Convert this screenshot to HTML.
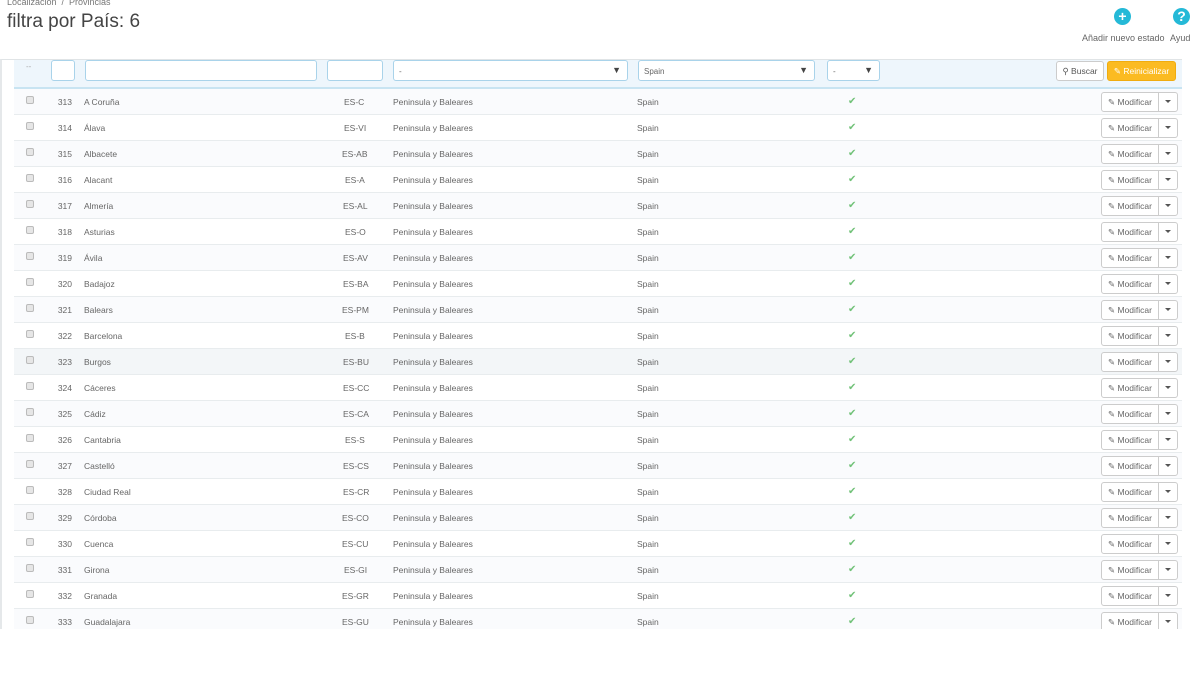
<!DOCTYPE html>
<html><head><meta charset="utf-8"><style>
*{box-sizing:border-box;margin:0;padding:0}
body{width:1200px;height:680px;background:#fff;font-family:"Liberation Sans",sans-serif;position:relative;overflow:hidden;color:#555}
.bc{position:absolute;left:7px;top:-3px;font-size:9px;color:#777}
h1{position:absolute;left:7px;top:11px;font-size:19px;font-weight:normal;color:#444}
.tb{position:absolute;top:8px;font-size:9px;color:#666;white-space:nowrap}
.ic{position:absolute;top:8px;width:17px;height:17px;border-radius:50%;background:#25b9d7;color:#fff;font-weight:bold;font-size:14px;line-height:17px;text-align:center}
.panel{position:absolute;left:0;top:59px;width:1182px;height:570px;border-left:2px solid #e5e8ea;border-top:1px solid #e0e4e6;overflow:hidden}
.filter{position:absolute;left:12px;top:0;width:1168px;height:29px;background:#eef6fc;border-bottom:2px solid #c8e4f2}
.in{position:absolute;top:0;height:21px;border:1px solid #a9d3ea;border-radius:3px;background:#fff;font-size:8px;color:#666;padding:6px 5px}
.in .ar{position:absolute;right:6px;top:4px;font-size:9px;color:#444}
.btn{position:absolute;top:1px;height:20px;border-radius:3px;font-size:8.5px;line-height:18px;text-align:center}
.row{position:absolute;left:12px;width:1168px;height:26px;border-bottom:1px solid #e8ecee;font-size:8.5px;color:#666}
.row.a{background:#fafbfd}.row.h{background:#f3f6f8}
.row span{position:absolute;top:8px}
.cb{position:absolute;left:12px;top:7px;width:8px;height:8px;border:1px solid #bbb;border-radius:2px;background:#e6e6e6}
.id{left:38px;width:20px;text-align:right}
.ck{color:#72c279;font-size:10px;top:7px!important;left:834px}
.mod{position:absolute;left:1087px;top:3px;width:77px;height:20px;border:1px solid #ccc;border-radius:3px;background:#fff}
.mod b{position:absolute;left:0;top:0;width:57px;height:18px;border-right:1px solid #ccc;font-weight:normal;font-size:8.5px;line-height:18px;text-align:center;color:#666}
.mod i{position:absolute;left:63px;top:7px;border-left:3px solid transparent;border-right:3px solid transparent;border-top:3px solid #555}
</style></head><body>
<div class="bc">Localización &nbsp;/&nbsp; Provincias</div>
<h1>filtra por País: 6</h1>
<div class="ic" style="left:1114px">+</div>
<div class="ic" style="left:1173px">?</div>
<div class="tb" style="left:1082px;top:33px">Añadir nuevo estado</div>
<div class="tb" style="left:1170px;top:33px">Ayud</div>
<div class="panel">
<div class="filter">
<span style="position:absolute;left:12px;top:2px;font-size:8px;color:#aaa">--</span>
<div class="in" style="left:37px;width:24px"></div>
<div class="in" style="left:71px;width:232px"></div>
<div class="in" style="left:313px;width:56px"></div>
<div class="in" style="left:379px;width:235px">-<span class="ar">▼</span></div>
<div class="in" style="left:624px;width:177px">Spain<span class="ar">▼</span></div>
<div class="in" style="left:813px;width:53px">-<span class="ar">▼</span></div>
<div class="btn" style="left:1042px;width:48px;border:1px solid #ccc;background:#fff;color:#555">&#9906; Buscar</div>
<div class="btn" style="left:1093px;width:69px;background:#fbbb22;border:1px solid #f0ac10;color:#fff">&#9998; Reinicializar</div>
</div>
<div class="row a" style="top:29px"><div class="cb"></div><span class="id">313</span><span style="left:70px">A Coruña</span><span style="left:330px">ES-C</span><span style="left:379px">Peninsula y Baleares</span><span style="left:623px">Spain</span><span class="ck">✔</span><div class="mod"><b>✎ Modificar</b><i></i></div></div>
<div class="row" style="top:55px"><div class="cb"></div><span class="id">314</span><span style="left:70px">Álava</span><span style="left:330px">ES-VI</span><span style="left:379px">Peninsula y Baleares</span><span style="left:623px">Spain</span><span class="ck">✔</span><div class="mod"><b>✎ Modificar</b><i></i></div></div>
<div class="row a" style="top:81px"><div class="cb"></div><span class="id">315</span><span style="left:70px">Albacete</span><span style="left:328px">ES-AB</span><span style="left:379px">Peninsula y Baleares</span><span style="left:623px">Spain</span><span class="ck">✔</span><div class="mod"><b>✎ Modificar</b><i></i></div></div>
<div class="row" style="top:107px"><div class="cb"></div><span class="id">316</span><span style="left:70px">Alacant</span><span style="left:331px">ES-A</span><span style="left:379px">Peninsula y Baleares</span><span style="left:623px">Spain</span><span class="ck">✔</span><div class="mod"><b>✎ Modificar</b><i></i></div></div>
<div class="row a" style="top:133px"><div class="cb"></div><span class="id">317</span><span style="left:70px">Almería</span><span style="left:329px">ES-AL</span><span style="left:379px">Peninsula y Baleares</span><span style="left:623px">Spain</span><span class="ck">✔</span><div class="mod"><b>✎ Modificar</b><i></i></div></div>
<div class="row" style="top:159px"><div class="cb"></div><span class="id">318</span><span style="left:70px">Asturias</span><span style="left:331px">ES-O</span><span style="left:379px">Peninsula y Baleares</span><span style="left:623px">Spain</span><span class="ck">✔</span><div class="mod"><b>✎ Modificar</b><i></i></div></div>
<div class="row a" style="top:185px"><div class="cb"></div><span class="id">319</span><span style="left:70px">Ávila</span><span style="left:329px">ES-AV</span><span style="left:379px">Peninsula y Baleares</span><span style="left:623px">Spain</span><span class="ck">✔</span><div class="mod"><b>✎ Modificar</b><i></i></div></div>
<div class="row" style="top:211px"><div class="cb"></div><span class="id">320</span><span style="left:70px">Badajoz</span><span style="left:329px">ES-BA</span><span style="left:379px">Peninsula y Baleares</span><span style="left:623px">Spain</span><span class="ck">✔</span><div class="mod"><b>✎ Modificar</b><i></i></div></div>
<div class="row a" style="top:237px"><div class="cb"></div><span class="id">321</span><span style="left:70px">Balears</span><span style="left:328px">ES-PM</span><span style="left:379px">Peninsula y Baleares</span><span style="left:623px">Spain</span><span class="ck">✔</span><div class="mod"><b>✎ Modificar</b><i></i></div></div>
<div class="row" style="top:263px"><div class="cb"></div><span class="id">322</span><span style="left:70px">Barcelona</span><span style="left:331px">ES-B</span><span style="left:379px">Peninsula y Baleares</span><span style="left:623px">Spain</span><span class="ck">✔</span><div class="mod"><b>✎ Modificar</b><i></i></div></div>
<div class="row h" style="top:289px"><div class="cb"></div><span class="id">323</span><span style="left:70px">Burgos</span><span style="left:329px">ES-BU</span><span style="left:379px">Peninsula y Baleares</span><span style="left:623px">Spain</span><span class="ck">✔</span><div class="mod"><b>✎ Modificar</b><i></i></div></div>
<div class="row" style="top:315px"><div class="cb"></div><span class="id">324</span><span style="left:70px">Cáceres</span><span style="left:329px">ES-CC</span><span style="left:379px">Peninsula y Baleares</span><span style="left:623px">Spain</span><span class="ck">✔</span><div class="mod"><b>✎ Modificar</b><i></i></div></div>
<div class="row a" style="top:341px"><div class="cb"></div><span class="id">325</span><span style="left:70px">Cádiz</span><span style="left:329px">ES-CA</span><span style="left:379px">Peninsula y Baleares</span><span style="left:623px">Spain</span><span class="ck">✔</span><div class="mod"><b>✎ Modificar</b><i></i></div></div>
<div class="row" style="top:367px"><div class="cb"></div><span class="id">326</span><span style="left:70px">Cantabria</span><span style="left:331px">ES-S</span><span style="left:379px">Peninsula y Baleares</span><span style="left:623px">Spain</span><span class="ck">✔</span><div class="mod"><b>✎ Modificar</b><i></i></div></div>
<div class="row a" style="top:393px"><div class="cb"></div><span class="id">327</span><span style="left:70px">Castelló</span><span style="left:329px">ES-CS</span><span style="left:379px">Peninsula y Baleares</span><span style="left:623px">Spain</span><span class="ck">✔</span><div class="mod"><b>✎ Modificar</b><i></i></div></div>
<div class="row" style="top:419px"><div class="cb"></div><span class="id">328</span><span style="left:70px">Ciudad Real</span><span style="left:329px">ES-CR</span><span style="left:379px">Peninsula y Baleares</span><span style="left:623px">Spain</span><span class="ck">✔</span><div class="mod"><b>✎ Modificar</b><i></i></div></div>
<div class="row a" style="top:445px"><div class="cb"></div><span class="id">329</span><span style="left:70px">Córdoba</span><span style="left:328px">ES-CO</span><span style="left:379px">Peninsula y Baleares</span><span style="left:623px">Spain</span><span class="ck">✔</span><div class="mod"><b>✎ Modificar</b><i></i></div></div>
<div class="row" style="top:471px"><div class="cb"></div><span class="id">330</span><span style="left:70px">Cuenca</span><span style="left:328px">ES-CU</span><span style="left:379px">Peninsula y Baleares</span><span style="left:623px">Spain</span><span class="ck">✔</span><div class="mod"><b>✎ Modificar</b><i></i></div></div>
<div class="row a" style="top:497px"><div class="cb"></div><span class="id">331</span><span style="left:70px">Girona</span><span style="left:330px">ES-GI</span><span style="left:379px">Peninsula y Baleares</span><span style="left:623px">Spain</span><span class="ck">✔</span><div class="mod"><b>✎ Modificar</b><i></i></div></div>
<div class="row" style="top:523px"><div class="cb"></div><span class="id">332</span><span style="left:70px">Granada</span><span style="left:328px">ES-GR</span><span style="left:379px">Peninsula y Baleares</span><span style="left:623px">Spain</span><span class="ck">✔</span><div class="mod"><b>✎ Modificar</b><i></i></div></div>
<div class="row a" style="top:549px"><div class="cb"></div><span class="id">333</span><span style="left:70px">Guadalajara</span><span style="left:328px">ES-GU</span><span style="left:379px">Peninsula y Baleares</span><span style="left:623px">Spain</span><span class="ck">✔</span><div class="mod"><b>✎ Modificar</b><i></i></div></div>
</div>
</body></html>
